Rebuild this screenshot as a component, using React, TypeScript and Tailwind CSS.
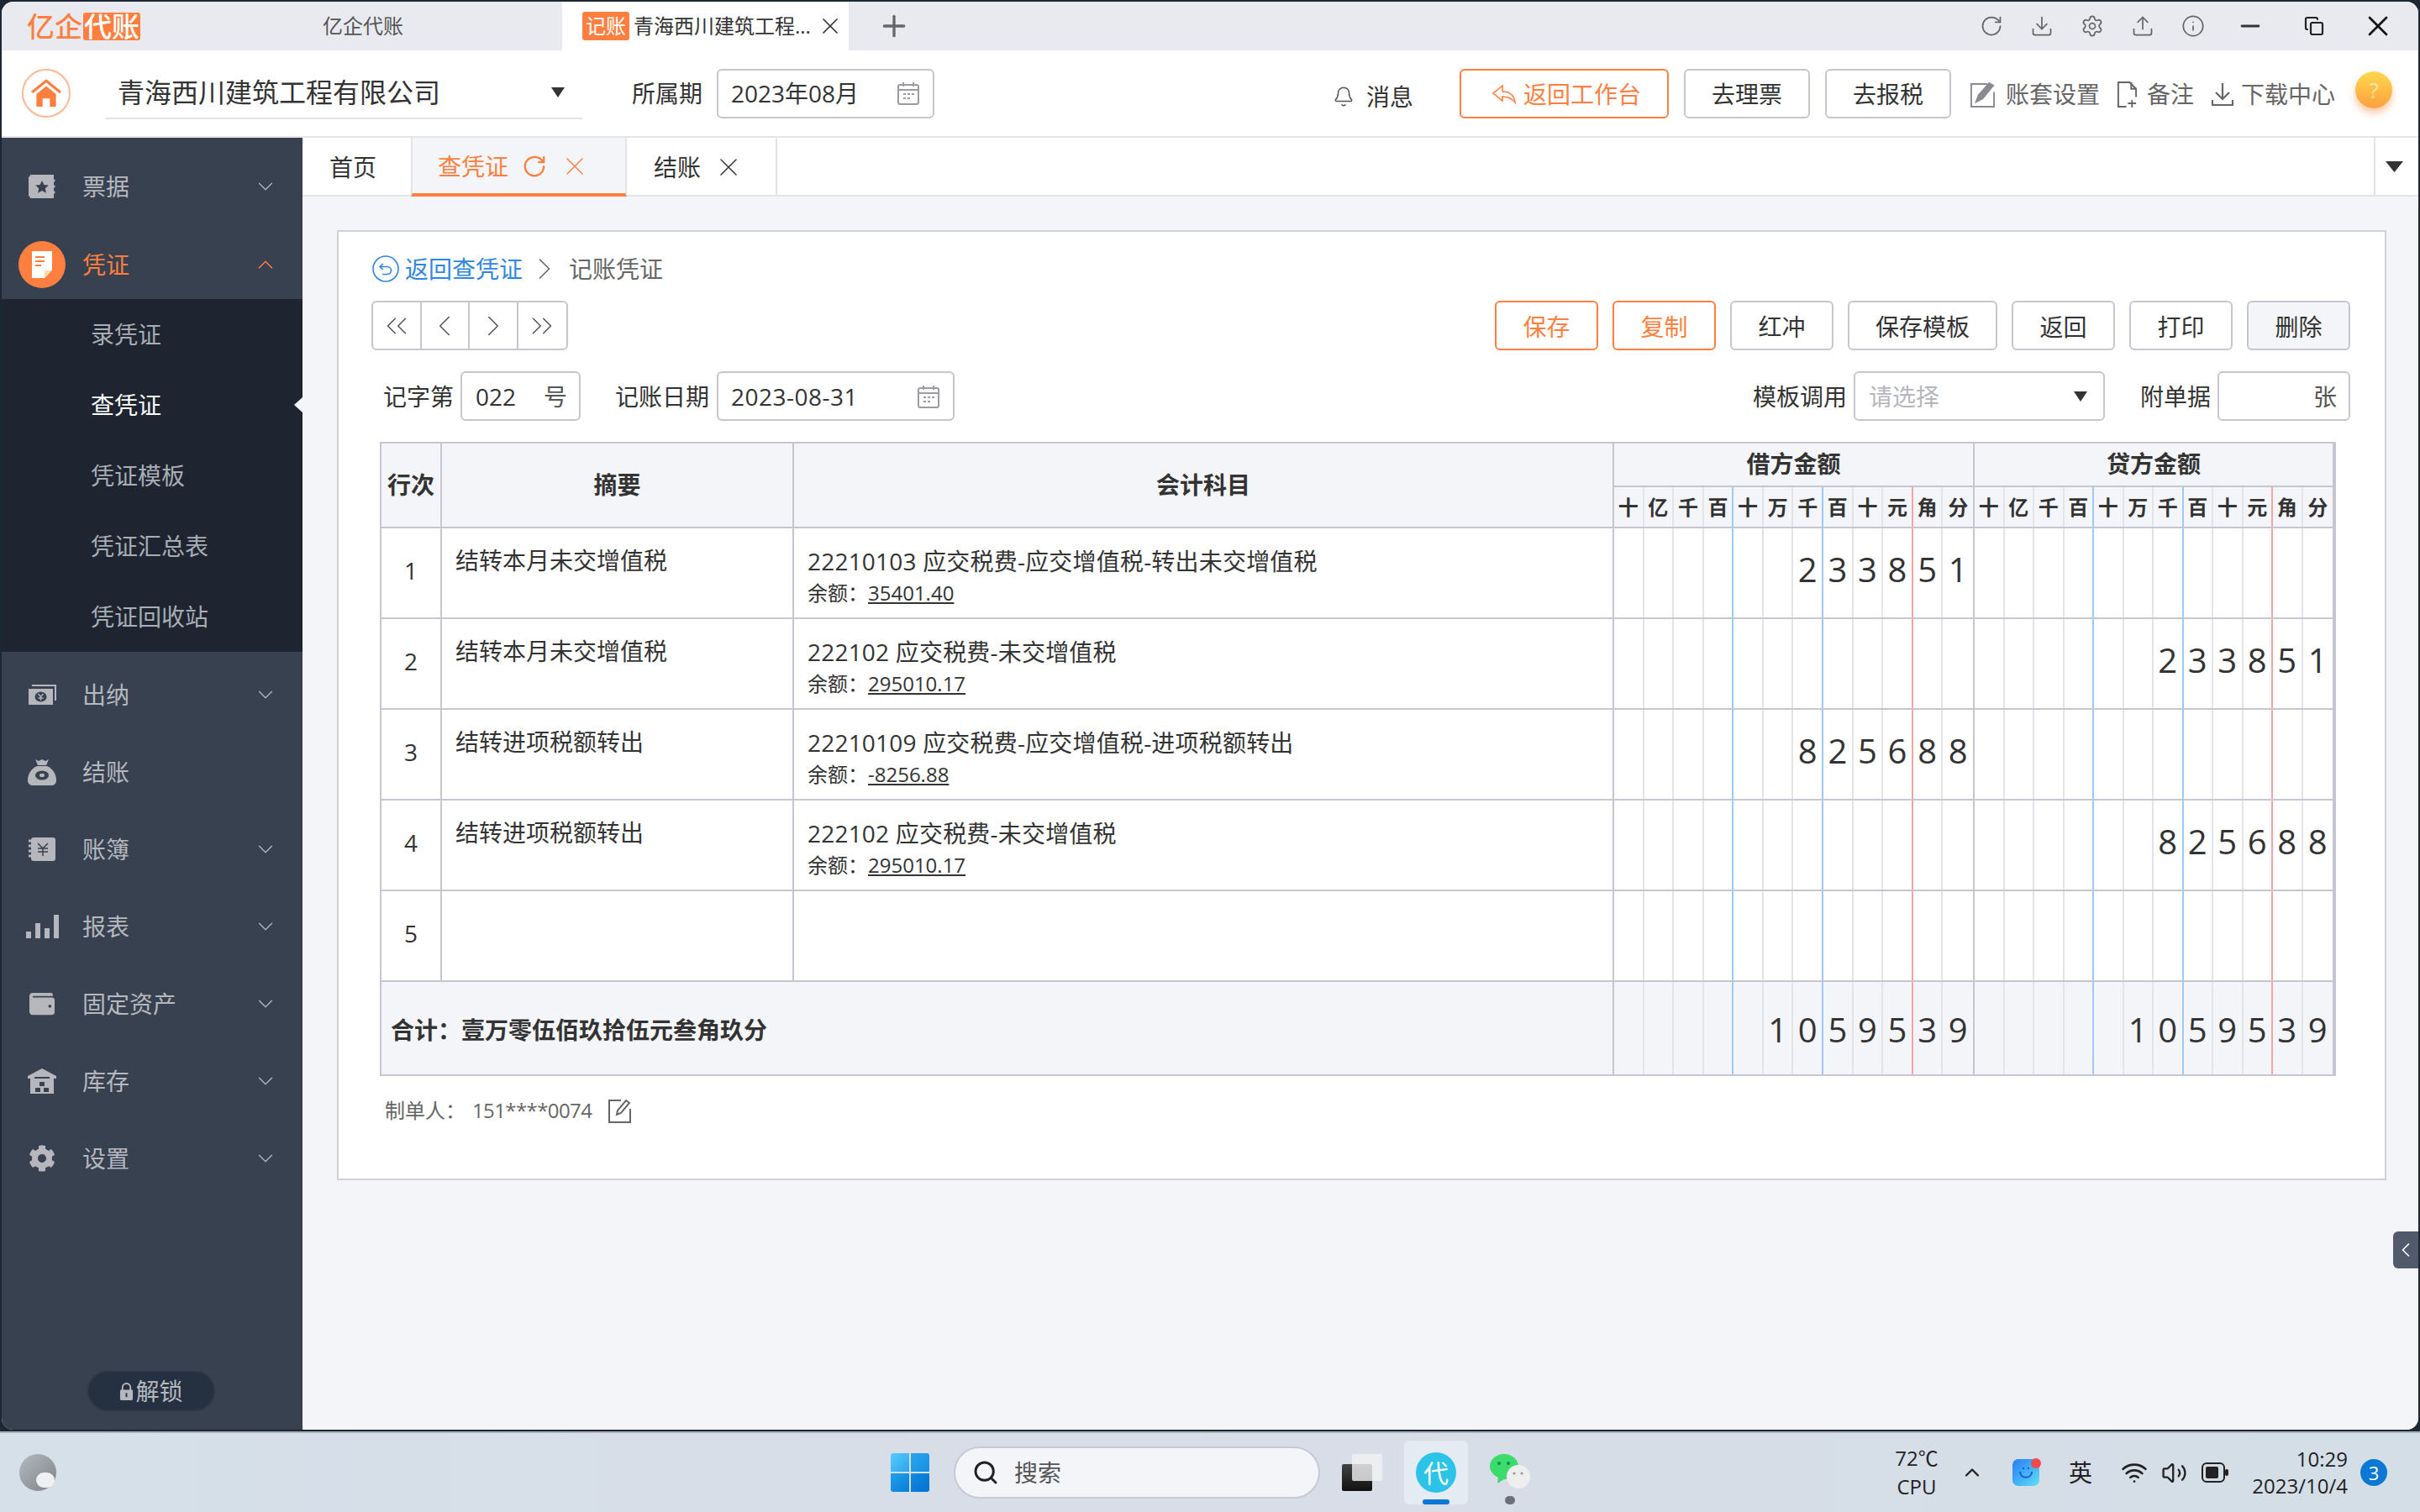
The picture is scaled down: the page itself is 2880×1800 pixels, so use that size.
import { Bell, ChevronDown, ChevronLeft, ChevronRight, ChevronUp, ChevronsLeft, ChevronsRight, Copy, Download, Info, Minus, Plus, RotateCw, Search, Settings, Upload, Volume2, Wifi, X } from 'lucide-react'
import { FaCog, FaWallet } from 'react-icons/fa'

const Caret = ({ className = 'w-[16px] h-[12px]' }: { className?: string }) => (
  <svg viewBox="0 0 16 12" preserveAspectRatio="none" className={className}>
    <path d="M0 0h16L8 12z" fill="#333" />
  </svg>
)

const Calendar = () => (
  <svg viewBox="0 0 26 28" className="w-[26px] h-[28px]" fill="none" stroke="#9a9ba3" strokeWidth="2">
    <rect x="1" y="4" width="24" height="23" rx="2" />
    <path d="M1 10h24M7 1v5M19 1v5M7 15h3M12 15h3M17 15h3M7 20h3M12 20h3" />
  </svg>
)

const TicketIcon = () => (
  <svg viewBox="0 0 34 30" className="w-[34px] h-[30px]">
    <path d="M3 1h28v5l2 2-2 2v3l2 2-2 2v3l2 2-2 2v5H3c0-2-2-3-2-3V4s2-1 2-3z" fill="#b5b7bd" />
    <path d="M17 8l2.4 5 5.4.6-4 3.7 1.1 5.4L17 20l-4.9 2.7 1.1-5.4-4-3.7 5.4-.6z" fill="#38414f" />
  </svg>
)

const VoucherIcon = () => (
  <div className="w-[56px] h-[56px] rounded-full bg-[#ff7f40] flex items-center justify-center">
    <svg viewBox="0 0 24 32" className="w-[24px] h-[32px]">
      <path d="M0 0h24v22l-9 10H0z" fill="#fff" />
      <path d="M4 7h11M4 12h11M4 17h7" stroke="#ff7f40" strokeWidth="2" />
      <path d="M15 32v-9h9z" fill="#ffd9a8" />
    </svg>
  </div>
)

const CashIcon = () => (
  <svg viewBox="0 0 34 28" className="w-[34px] h-[28px]">
    <path d="M1 7h29v19H1z" fill="#b5b7bd" />
    <path d="M5 3h28v18" fill="none" stroke="#b5b7bd" strokeWidth="2" />
    <ellipse cx="15.5" cy="16.5" rx="7" ry="6" fill="#38414f" />
    <path d="M12.5 13l3 3.5 3-3.5M15.5 16.5V21M12.5 18h6" stroke="#b5b7bd" strokeWidth="1.3" fill="none" />
  </svg>
)

const BagIcon = () => (
  <svg viewBox="0 0 34 32" className="w-[34px] h-[32px]">
    <path d="M9 1l4 2 4-2 4 2 4-2-3 7H12z" fill="#b5b7bd" />
    <path d="M11 9h12c7 3 11 10 11 17 0 4-3 6-6 6H6c-3 0-6-2-6-6 0-7 4-14 11-17z" fill="#b5b7bd" />
    <ellipse cx="17" cy="20" rx="8" ry="5.5" fill="#38414f" />
    <ellipse cx="17" cy="20" rx="3" ry="2.2" fill="#b5b7bd" />
  </svg>
)

const LedgerIcon = () => (
  <svg viewBox="0 0 32 32" className="w-[32px] h-[32px]">
    <rect x="3" y="2" width="29" height="28" rx="3" fill="#b5b7bd" />
    <path d="M0 6h5M0 12h5M0 18h5M0 24h5" stroke="#b5b7bd" strokeWidth="3" />
    <path d="M11 9l6 6 6-6M17 15v9M11 15h12M11 19h12" stroke="#38414f" strokeWidth="1.5" fill="none" />
  </svg>
)

const BarsIcon = () => (
  <div className="flex items-end gap-[5px] h-[28px]">
    <div className="w-[6px] h-[8px] bg-[#b5b7bd]" />
    <div className="w-[6px] h-[18px] bg-[#b5b7bd]" />
    <div className="w-[6px] h-[12px] bg-[#b5b7bd]" />
    <div className="w-[6px] h-[28px] bg-[#b5b7bd]" />
  </div>
)

const StoreIcon = () => (
  <svg viewBox="0 0 34 30" className="w-[34px] h-[30px]">
    <path d="M17 0l17 9v3h-3v18H3V12H0V9z" fill="#b5b7bd" />
    <path d="M8 11h18" stroke="#38414f" strokeWidth="2" />
    <rect x="14" y="16" width="6" height="5" fill="#38414f" />
    <rect x="9" y="23" width="6" height="5" fill="#38414f" />
    <rect x="19" y="23" width="6" height="5" fill="#38414f" />
  </svg>
)

const menuTop = [{ label: '票据', icon: <TicketIcon /> }]

const subMenu = ['录凭证', '查凭证', '凭证模板', '凭证汇总表', '凭证回收站']

const menuBottom = [
  { label: '出纳', icon: <CashIcon />, arrow: true },
  { label: '结账', icon: <BagIcon />, arrow: false },
  { label: '账簿', icon: <LedgerIcon />, arrow: true },
  { label: '报表', icon: <BarsIcon />, arrow: true },
  { label: '固定资产', icon: <FaWallet className="w-[30px] h-[30px] text-[#b5b7bd]" />, arrow: true },
  { label: '库存', icon: <StoreIcon />, arrow: true },
  { label: '设置', icon: <FaCog className="w-[32px] h-[32px] text-[#b5b7bd]" />, arrow: true },
]

function MenuRow({ label, icon, arrow = true }: { label: string; icon: React.ReactNode; arrow?: boolean }) {
  return (
    <div className="h-[92px] flex items-center text-[28px] text-[#b5b8bf]">
      <div className="w-[96px] flex justify-center">{icon}</div>
      <span>{label}</span>
      {arrow && <ChevronDown className="ml-auto mr-[29px] w-[30px] h-[30px]" strokeWidth={1} />}
    </div>
  )
}

function Sidebar() {
  return (
    <aside className="w-[358px] bg-[#38414f] flex flex-col pt-[12px]">
      {menuTop.map((m) => (
        <MenuRow key={m.label} label={m.label} icon={m.icon} />
      ))}
      <div className="h-[88px] pt-[6px] flex items-center text-[28px] text-[#ff7f40]">
        <div className="w-[96px] flex justify-center">
          <VoucherIcon />
        </div>
        <span>凭证</span>
        <ChevronUp className="ml-auto mr-[29px] w-[30px] h-[30px]" strokeWidth={1.2} />
      </div>
      <div className="bg-[#1e2530] mb-[5px]">
        {subMenu.map((s) => (
          <div key={s} className={`relative h-[84px] pl-[106px] flex items-center text-[28px] ${s === '查凭证' ? 'text-white' : 'text-[#a9adb5]'}`}>
            {s}
            {s === '查凭证' && <div className="absolute right-0 top-[33px] border-y-[9px] border-y-transparent border-r-[10px] border-r-[#f4f5f9]" />}
          </div>
        ))}
      </div>
      {menuBottom.map((m) => (
        <MenuRow key={m.label} label={m.label} icon={m.icon} arrow={m.arrow} />
      ))}
      <div className="mt-auto mb-[22px] ml-[102px] w-[152px] h-[48px] rounded-full bg-[#253140] border-2 border-[#2d3643] flex items-center justify-center text-[28px] text-[#b5b8bf]">
        <svg viewBox="0 0 18 24" className="w-[17px] h-[23px] mr-[2px]">
          <path d="M4 11V7a5 5 0 0 1 10 0v4" fill="none" stroke="#b5b7bd" strokeWidth="2" />
          <rect x="1" y="10" width="16" height="13" rx="1.5" fill="#b5b7bd" />
          <rect x="8" y="14" width="2" height="5" fill="#253140" />
        </svg>
        解锁
      </div>
    </aside>
  )
}

function Btn({ children, w, tone = 'plain' }: { children: React.ReactNode; w: string; tone?: 'plain' | 'orange' | 'muted' }) {
  const toneCls = tone === 'orange' ? 'border-[#ff7f40] text-[#ff7f40] bg-white' : tone === 'muted' ? 'border-[#c6c7ce] text-[#333] bg-[#f4f5f9]' : 'border-[#c6c7ce] text-[#333] bg-white'
  return <div className={`${w} h-[59px] pt-[2px] border-2 rounded-[6px] flex items-center justify-center text-[28px] ${toneCls}`}>{children}</div>
}

const digitLine = (i: number) => {
  if (i === 11) return ''
  if (i === 9) return 'border-r-2 border-r-[#f5a3a3]'
  if (i === 3 || i === 6) return 'border-r-2 border-r-[#9cc9f7]'
  return 'border-r-2 border-r-[#e3e4e9]'
}

const units = ['十', '亿', '千', '百', '十', '万', '千', '百', '十', '元', '角', '分']

function DigitCells({ value = '', offset = 'pb-[8px]' }: { value?: string; offset?: string }) {
  const cells = value.padStart(12, ' ').split('')
  return (
    <div className="grid grid-cols-12 h-full border-r-2 border-r-[#c5c6cf]">
      {cells.map((c, i) => (
        <div key={i} className={`flex items-center justify-center text-[40px] leading-none text-[#333] ${offset} ${digitLine(i)}`}>
          {c.trim()}
        </div>
      ))}
    </div>
  )
}

const rows = [
  { no: 1, summary: '结转本月未交增值税', account: '22210103 应交税费-应交增值税-转出未交增值税', balance: '35401.40', debit: '233851', credit: '' },
  { no: 2, summary: '结转本月未交增值税', account: '222102 应交税费-未交增值税', balance: '295010.17', debit: '', credit: '233851' },
  { no: 3, summary: '结转进项税额转出', account: '22210109 应交税费-应交增值税-进项税额转出', balance: '-8256.88', debit: '825688', credit: '' },
  { no: 4, summary: '结转进项税额转出', account: '222102 应交税费-未交增值税', balance: '295010.17', debit: '', credit: '825688' },
  { no: 5, summary: '', account: '', balance: '', debit: '', credit: '' },
]

const cols = 'grid grid-cols-[72px_419px_976px_429px_428px]'

function VoucherTable() {
  return (
    <div className="ml-[10px] mt-[25px] w-[2328px] border-2 border-[#c5c6cf] text-[#333]">
      <div className={`${cols} h-[101px] bg-[#f4f5f9] border-b-2 border-b-[#c5c6cf] font-bold text-[28px]`}>
        <div className="flex items-center justify-center pb-[2px] border-r-2 border-r-[#c5c6cf]">行次</div>
        <div className="flex items-center justify-center pb-[2px] border-r-2 border-r-[#c5c6cf]">摘要</div>
        <div className="flex items-center justify-center pb-[2px] border-r-2 border-r-[#c5c6cf]">会计科目</div>
        {['借方金额', '贷方金额'].map((t) => (
          <div key={t} className="flex flex-col border-r-2 border-r-[#c5c6cf]">
            <div className="h-[52px] pb-[2px] flex items-center justify-center border-b-2 border-b-[#c5c6cf]">{t}</div>
            <div className="flex-1 grid grid-cols-12">
              {units.map((u, i) => (
                <div key={i} className={`flex items-center justify-center text-[24px] ${digitLine(i)}`}>{u}</div>
              ))}
            </div>
          </div>
        ))}
      </div>
      {rows.map((r) => (
        <div key={r.no} className={`${cols} h-[108px] border-b-2 border-b-[#c5c6cf] bg-white`}>
          <div className="flex items-center justify-center pb-[6px] text-[28px] border-r-2 border-r-[#c5c6cf]">{r.no}</div>
          <div className="pl-[16px] pt-[18px] text-[28px] leading-[40px] border-r-2 border-r-[#c5c6cf]">{r.summary}</div>
          <div className="pl-[16px] pt-[19px] border-r-2 border-r-[#c5c6cf]">
            <div className="text-[28px] leading-[40px] tracking-[0.2px]">{r.account}</div>
            {r.balance && (
              <div className="text-[24px] leading-[36px]">
                余额：<span className="underline">{r.balance}</span>
              </div>
            )}
          </div>
          <DigitCells value={r.debit} />
          <DigitCells value={r.credit} />
        </div>
      ))}
      <div className={`${cols} h-[110px] bg-[#f4f5f9]`}>
        <div className="col-span-3 pl-[11px] pt-[3px] flex items-center font-bold text-[28px] border-r-2 border-r-[#c5c6cf]">合计：壹万零伍佰玖拾伍元叁角玖分</div>
        <DigitCells value="1059539" offset="pt-[3px]" />
        <DigitCells value="1059539" offset="pt-[3px]" />
      </div>
    </div>
  )
}

function TitleBar() {
  return (
    <div className="h-[58px] bg-[#e9eaef] flex items-center text-[24px] text-[#555]">
      <div className="ml-[29px] w-[138px] flex items-center text-[33px] leading-none font-medium text-[#ff7f40]">
        <span className="px-[1px]">亿企</span>
        <span className="bg-[#ff7f40] text-white rounded-[3px] px-[1px]">代账</span>
      </div>
      <span className="ml-[215px] w-[285px]">亿企代账</span>
      <div className="w-[341px] h-full bg-white flex items-center text-[#333]">
        <span className="ml-[24px] w-[56px] h-[34px] rounded-[3px] bg-[#ff7f40] text-white flex items-center justify-center text-[24px] leading-none">记账</span>
        <span className="ml-[5px] w-[212px] whitespace-nowrap overflow-hidden">青海西川建筑工程...</span>
        <X className="ml-[6px] w-[32px] h-[32px]" strokeWidth={1.3} />
      </div>
      <Plus className="ml-[34px] w-[40px] h-[40px] text-[#666]" strokeWidth={2} />
      <div className="ml-auto flex items-center text-[#666]">
        <RotateCw className="w-[28px] h-[28px] mr-[32px]" strokeWidth={1.5} />
        <Download className="w-[28px] h-[28px] mr-[32px]" strokeWidth={1.5} />
        <Settings className="w-[28px] h-[28px] mr-[32px]" strokeWidth={1.5} />
        <Upload className="w-[28px] h-[28px] mr-[32px]" strokeWidth={1.5} />
        <Info className="w-[28px] h-[28px] mr-[37px]" strokeWidth={1.5} />
        <Minus className="w-[34px] h-[34px] mr-[47px] text-[#333]" strokeWidth={2} />
        <Copy className="w-[24px] h-[24px] mr-[44px] text-[#222]" strokeWidth={2.2} />
        <X className="w-[40px] h-[40px] mr-[28px] text-[#111]" strokeWidth={1.6} />
      </div>
    </div>
  )
}

function Header() {
  return (
    <div className="h-[104px] bg-white border-b-2 border-b-[#e5e6ea] flex items-center text-[28px] text-[#333]">
      <div className="ml-[24px] w-[58px] h-[58px] rounded-full border-2 border-[#ffb894] flex items-center justify-center">
        <svg viewBox="0 0 34 30" className="w-[36px] h-[32px]">
          <path d="M1 14L17 1l16 13" fill="none" stroke="#ff7f40" strokeWidth="3" />
          <path d="M17 7l11 9v14h-7v-9h-8v9H6V16z" fill="#ff7f40" />
        </svg>
      </div>
      <div className="ml-[41px] w-[568px] h-[62px] border-b-2 border-b-[#e3e4e8] pl-[15px] flex items-center text-[32px]">
        青海西川建筑工程有限公司
        <Caret className="ml-auto mr-[21px] w-[16px] h-[12px]" />
      </div>
      <span className="ml-[59px]">所属期</span>
      <div className="ml-[17px] w-[259px] h-[59px] border-2 border-[#c6c7ce] rounded-[6px] pl-[15px] pr-[16px] flex items-center justify-between">
        2023年08月
        <Calendar />
      </div>
      <Bell className="ml-[474px] mt-[8px] w-[26px] h-[30px] text-[#555]" strokeWidth={1.4} />
      <span className="ml-[14px] mt-[8px]">消息</span>
      <div className="ml-[55px] flex items-center gap-[18px]">
        <div className="w-[249px] h-[59px] pt-[2px] pl-[5px] border-2 border-[#ff7f40] rounded-[6px] text-[#ff7f40] flex items-center justify-center">
          <svg viewBox="0 0 30 24" className="w-[30px] h-[24px] mr-[8px]" fill="none" stroke="#ff7f40" strokeWidth="1.6">
            <path d="M13 2L2 11l11 9v-5c7 0 11 2 15 7-1-8-6-13-15-13z" />
          </svg>
          返回工作台
        </div>
        <Btn w="w-[150px]">去理票</Btn>
        <Btn w="w-[150px]">去报税</Btn>
      </div>
      <div className="ml-[22px] pt-[2px] flex items-center text-[#666]">
        <svg viewBox="0 0 32 34" className="w-[31px] h-[33px]" fill="none" stroke="#8a8b92" strokeWidth="2">
          <path d="M22 4H2v28h28V14" />
          <path d="M8 26l3-8L24 3l5 3-13 16z" fill="#8a8b92" />
        </svg>
        <span className="ml-[12px]">账套设置</span>
        <svg viewBox="0 0 26 34" className="ml-[20px] w-[25px] h-[33px]" fill="none" stroke="#666" strokeWidth="2">
          <path d="M12 32H2V2h14l8 8v10M18 2v8h6M19 24v9M14 28h10" />
        </svg>
        <span className="ml-[11px]">备注</span>
        <svg viewBox="0 0 28 30" className="ml-[20px] w-[28px] h-[30px]" fill="none" stroke="#666" strokeWidth="2.2">
          <path d="M14 2v19M6 13l8 8 8-8M2 22v6h24v-6" />
        </svg>
        <span className="ml-[8px]">下载中心</span>
      </div>
      <div className="ml-[24px] mb-[8px] w-[44px] h-[44px] rounded-full bg-linear-to-b from-[#ffd84f] to-[#ff9f3d] shadow-[0_6px_8px_rgba(255,150,80,0.5)] flex items-center justify-center text-[#ffe9a6] text-[26px]">?</div>
    </div>
  )
}

function TabsBar() {
  return (
    <div className="h-[70px] bg-white border-b-2 border-b-[#e3e4e8] flex text-[28px] text-[#333]">
      <div className="w-[129px] pt-[2px] pl-[32px] flex items-center">首页</div>
      <div className="w-[257px] pt-[2px] -mb-[2px] bg-[#f4f5f9] border-x-2 border-x-[#e3e4e8] border-b-4 border-b-[#ff7f40] flex items-center pl-[30px] text-[#ff7f40]">
        查凭证
        <RotateCw className="ml-[16px] w-[30px] h-[30px]" strokeWidth={1.8} />
        <X className="ml-[15px] w-[36px] h-[36px]" strokeWidth={1} />
      </div>
      <div className="w-[179px] pt-[2px] border-r-2 border-r-[#e3e4e8] flex items-center pl-[32px]">
        结账
        <X className="ml-[15px] w-[36px] h-[36px]" strokeWidth={1} />
      </div>
      <div className="ml-auto w-[53px] border-l-2 border-l-[#e3e4e8] flex items-center justify-center">
        <Caret className="mr-[6px] w-[21px] h-[13px]" />
      </div>
    </div>
  )
}

function VoucherCard() {
  return (
    <div className="relative mt-[40px] ml-[41px] mr-[38px] h-[1131px] bg-white border-2 border-[#cfd0d8] pl-[39px] text-[28px] text-[#333]">
      <div className="mt-[24px] h-[40px] flex items-center">
        <svg viewBox="0 0 32 32" className="ml-[1px] w-[32px] h-[32px]" fill="none" stroke="#2f86e0" strokeWidth="1.6">
          <circle cx="16" cy="16" r="15" />
          <path d="M13 10l-4 3.5 4 3.5M9 13.5h9a4.5 4.5 0 0 1 0 9h-6" />
        </svg>
        <span className="ml-[7px] text-[#2f86e0]">返回查凭证</span>
        <ChevronRight className="ml-[4px] w-[44px] h-[44px] text-[#666]" strokeWidth={0.9} />
        <span className="ml-[7px] text-[#666]">记账凭证</span>
      </div>
      <div className="mt-[18px] h-[59px] flex items-center pr-[41px]">
        <div className="w-[234px] h-[59px] border-2 border-[#c6c7ce] rounded-[6px] grid grid-cols-4 text-[#555]">
          <div className="flex items-center justify-center border-r-2 border-r-[#c6c7ce]"><ChevronsLeft className="w-[42px] h-[42px]" strokeWidth={0.9} /></div>
          <div className="flex items-center justify-center border-r-2 border-r-[#c6c7ce]"><ChevronLeft className="w-[42px] h-[42px]" strokeWidth={0.9} /></div>
          <div className="flex items-center justify-center border-r-2 border-r-[#c6c7ce]"><ChevronRight className="w-[42px] h-[42px]" strokeWidth={0.9} /></div>
          <div className="flex items-center justify-center"><ChevronsRight className="w-[42px] h-[42px]" strokeWidth={0.9} /></div>
        </div>
        <div className="ml-auto flex gap-[17px]">
          <Btn w="w-[123px]" tone="orange">保存</Btn>
          <Btn w="w-[123px]" tone="orange">复制</Btn>
          <Btn w="w-[123px]">红冲</Btn>
          <Btn w="w-[178px]">保存模板</Btn>
          <Btn w="w-[123px]">返回</Btn>
          <Btn w="w-[123px]">打印</Btn>
          <Btn w="w-[123px]" tone="muted">删除</Btn>
        </div>
      </div>
      <div className="mt-[25px] h-[59px] flex items-center pr-[41px]">
        <span className="ml-[14px]">记字第</span>
        <div className="ml-[8px] w-[143px] h-[59px] border-2 border-[#c6c7ce] rounded-[6px] pl-[16px] pr-[14px] flex items-center justify-between">
          022<span className="text-[#555]">号</span>
        </div>
        <span className="ml-[41px]">记账日期</span>
        <div className="ml-[9px] w-[283px] h-[59px] border-2 border-[#c6c7ce] rounded-[6px] pl-[15px] pr-[16px] flex items-center justify-between">
          <span className="tracking-[0.5px]">2023-08-31</span>
          <Calendar />
        </div>
        <span className="ml-auto">模板调用</span>
        <div className="ml-[8px] w-[299px] h-[59px] border-2 border-[#c6c7ce] rounded-[6px] pl-[16px] pr-[19px] flex items-center justify-between text-[#b5b6bc]">
          请选择
          <Caret className="w-[16px] h-[12px]" />
        </div>
        <span className="ml-[42px]">附单据</span>
        <div className="ml-[8px] w-[158px] h-[59px] border-2 border-[#c6c7ce] rounded-[6px] pr-[14px] flex items-center justify-end text-[#555]">张</div>
      </div>
      <VoucherTable />
      <div className="mt-[24px] ml-[16px] h-[34px] flex items-center text-[24px] text-[#666]">
        制单人：
        <span className="ml-[8px] tracking-[-0.6px]">151****0074</span>
        <svg viewBox="0 0 28 30" className="ml-[19px] w-[28px] h-[30px]" fill="none" stroke="#666" strokeWidth="2">
          <path d="M16 3H2v26h25V13" />
          <path d="M11 20l1-5L22 3l4 3-10 12z" />
        </svg>
      </div>
    </div>
  )
}

function TrayApp() {
  return (
    <div className="relative w-[32px] h-[32px] rounded-[7px] bg-linear-to-br from-[#2c7bf5] to-[#63e0f2] flex items-center justify-center">
      <svg viewBox="0 0 20 20" className="w-[20px] h-[20px]" fill="none" stroke="#1c55d8" strokeWidth="2">
        <path d="M3 9c0 9 14 9 14 0M7 4v2M13 4v2" />
      </svg>
      <div className="absolute -top-[1px] -right-[2px] w-[12px] h-[12px] rounded-full bg-[#f4494b]" />
    </div>
  )
}

function Taskbar() {
  return (
    <div className="mt-[2px] h-[96px] border-t-2 border-t-[#a9b0b6] bg-linear-to-r from-[#d5e0e9] via-[#d9dde8] to-[#d3dee7] flex items-center text-[#222]">
      <div className="relative ml-[23px] w-[44px] h-[44px] rounded-full bg-linear-to-br from-[#b4bac0] to-[#7e8389]">
        <div className="absolute left-[20px] top-[22px] w-[22px] h-[18px] rounded-full bg-[#eef0f2]" />
      </div>
      <div className="ml-[993px] w-[46px] h-[46px] grid grid-cols-2 gap-[2px]">
        <div className="rounded-tl-[3px] bg-linear-to-br from-[#56cdfb] to-[#2aa5ec]" />
        <div className="rounded-tr-[3px] bg-linear-to-br from-[#2aa5ec] to-[#1590e3]" />
        <div className="rounded-bl-[3px] bg-linear-to-br from-[#1fa0ea] to-[#0a7fd8]" />
        <div className="rounded-br-[3px] bg-linear-to-br from-[#128ce0] to-[#0472d0]" />
      </div>
      <div className="ml-[29px] w-[436px] h-[62px] rounded-full bg-[#f3f5f9] border-2 border-[#c5cad4] flex items-center pl-[20px] text-[28px] text-[#555]">
        <Search className="w-[32px] h-[32px] text-[#222]" strokeWidth={2.2} />
        <span className="ml-[18px]">搜索</span>
      </div>
      <div className="relative ml-[26px] w-[48px] h-[44px]">
        <div className="absolute left-0 bottom-0 w-[36px] h-[32px] rounded-[2px] bg-linear-to-b from-[#444] to-[#111]" />
        <div className="absolute right-0 top-0 w-[36px] h-[32px] rounded-[2px] bg-[#f2f2f2]/80" />
      </div>
      <div className="relative ml-[26px] w-[76px] h-[76px] rounded-[6px] bg-[#e5ebf3] flex items-center justify-center">
        <div className="w-[48px] h-[48px] rounded-full bg-[#2cc3e8] text-white text-[30px] flex items-center justify-center">代</div>
        <div className="absolute bottom-0 left-[22px] w-[32px] h-[6px] rounded-full bg-[#0a78d4]" />
      </div>
      <div className="relative ml-[26px] w-[48px] h-[76px]">
        <svg viewBox="0 0 48 44" className="absolute left-0 top-[16px] w-[48px] h-[44px]">
          <path d="M17 0c10 0 17 7 17 15s-7 15-17 15l-8 5 1-7C4 25 0 20 0 15 0 7 7 0 17 0z" fill="#3bdb6c" />
          <circle cx="11" cy="11" r="2" fill="#1a8a45" />
          <circle cx="22" cy="11" r="2" fill="#1a8a45" />
          <ellipse cx="34" cy="27" rx="14" ry="14" fill="#eeeeee" />
          <circle cx="29" cy="23" r="1.6" fill="#999" />
          <circle cx="38" cy="23" r="1.6" fill="#999" />
        </svg>
        <div className="absolute left-[18px] bottom-0 w-[12px] h-[10px] rounded-full bg-[#6b7078]" />
      </div>
      <div className="ml-[434px] w-[52px] text-[24px] leading-[34px] text-center whitespace-nowrap">
        <div>72℃</div>
        <div>CPU</div>
      </div>
      <ChevronUp className="ml-[26px] w-[28px] h-[28px]" strokeWidth={2} />
      <div className="ml-[34px]"><TrayApp /></div>
      <span className="ml-[35px] text-[28px] w-[28px] leading-none">英</span>
      <Wifi className="ml-[34px] w-[32px] h-[32px]" strokeWidth={2} />
      <Volume2 className="ml-[16px] w-[31px] h-[31px]" strokeWidth={1.8} />
      <svg viewBox="0 0 32 24" className="ml-[17px] w-[32px] h-[24px]">
        <rect x="1" y="1" width="26" height="22" rx="5" fill="none" stroke="#222" strokeWidth="2" />
        <rect x="5" y="5" width="15" height="14" rx="2" fill="#222" />
        <rect x="28" y="8" width="4" height="8" rx="2" fill="#222" />
      </svg>
      <div className="w-[142px] text-[24px] leading-[32px] text-right">
        <div>10:29</div>
        <div>2023/10/4</div>
      </div>
      <div className="ml-[15px] w-[32px] h-[32px] rounded-full bg-[#0a78d4] text-white text-[22px] flex items-center justify-center">3</div>
    </div>
  )
}

export default function App() {
  return (
    <div className="w-[2880px] h-[1800px] overflow-hidden bg-[#1c2733] pt-[2px] font-['Open_Sans','Noto_Sans_CJK_SC',sans-serif]">
      <div className="mx-[2px] h-[1700px] rounded-[14px] overflow-hidden flex flex-col bg-[#f4f5f9]">
        <TitleBar />
        <Header />
        <div className="flex-1 flex min-h-0">
          <Sidebar />
          <main className="relative flex-1 bg-[#f4f5f9]">
            <TabsBar />
            <VoucherCard />
            <div className="absolute right-0 top-[1302px] w-[30px] h-[44px] rounded-l-[6px] bg-[#505a6b] flex items-center justify-center">
              <ChevronLeft className="w-[28px] h-[32px] text-white" strokeWidth={1.4} />
            </div>
          </main>
        </div>
      </div>
      <Taskbar />
    </div>
  )
}
